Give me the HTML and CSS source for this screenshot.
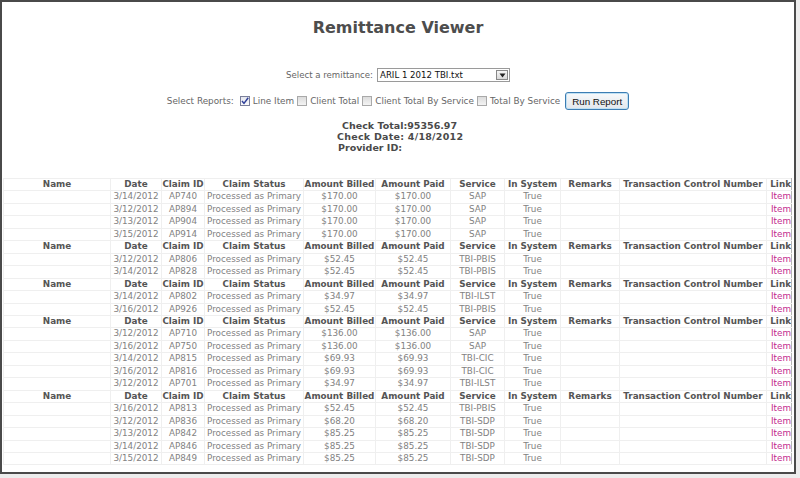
FILE: index.html
```html
<!DOCTYPE html>
<html>
<head>
<meta charset="utf-8">
<link rel="stylesheet" href="styles.css">
</head>
<body>
<div class="frame">
  <h1 class="title">Remittance Viewer</h1>
  <div class="row remit">
    <span class="lbl">Select a remittance:</span>
    <div class="select"><span class="sel-text">ARIL 1 2012 TBI.txt</span><span class="sel-btn"><svg width="7" height="5" viewBox="0 0 7 5"><path d="M0.5 0.5 L6.5 0.5 L3.5 4.5 Z" fill="#222"/></svg></span></div>
  </div>
  <div class="row reports">
    <span class="lbl first">Select Reports:</span>
    <span class="cb checked"><svg width="10" height="10" viewBox="0 0 10 10"><path d="M2 5 L4 7.4 L8.2 1.8" fill="none" stroke="#2e3f99" stroke-width="1.5"/></svg></span><span class="lbl">Line Item</span>
    <span class="cb"></span><span class="lbl">Client Total</span>
    <span class="cb"></span><span class="lbl">Client Total By Service</span>
    <span class="cb"></span><span class="lbl">Total By Service</span>
    <button class="run">Run Report</button>
  </div>
  <div class="check">
    <div>Check Total:95356.97</div>
    <div>Check Date: 4/18/2012</div>
    <div>Provider ID:</div>
  </div>
  <table class="grid">
    <colgroup>
      <col class="c-name"><col class="c-date"><col class="c-id"><col class="c-status"><col class="c-billed"><col class="c-paid"><col class="c-svc"><col class="c-sys"><col class="c-rem"><col class="c-tcn"><col class="c-link">
    </colgroup>
    <tbody>
      <tr class="hd"><th>Name</th><th>Date</th><th>Claim ID</th><th>Claim Status</th><th>Amount Billed</th><th>Amount Paid</th><th>Service</th><th>In System</th><th>Remarks</th><th>Transaction Control Number</th><th class="r">Link</th></tr>
      <tr><td></td><td>3/14/2012</td><td>AP740</td><td>Processed as Primary</td><td>$170.00</td><td>$170.00</td><td>SAP</td><td>True</td><td></td><td></td><td class="r"><a>Item</a></td></tr>
      <tr><td></td><td>3/12/2012</td><td>AP894</td><td>Processed as Primary</td><td>$170.00</td><td>$170.00</td><td>SAP</td><td>True</td><td></td><td></td><td class="r"><a>Item</a></td></tr>
      <tr><td></td><td>3/13/2012</td><td>AP904</td><td>Processed as Primary</td><td>$170.00</td><td>$170.00</td><td>SAP</td><td>True</td><td></td><td></td><td class="r"><a>Item</a></td></tr>
      <tr><td></td><td>3/15/2012</td><td>AP914</td><td>Processed as Primary</td><td>$170.00</td><td>$170.00</td><td>SAP</td><td>True</td><td></td><td></td><td class="r"><a>Item</a></td></tr>
      <tr class="hd"><th>Name</th><th>Date</th><th>Claim ID</th><th>Claim Status</th><th>Amount Billed</th><th>Amount Paid</th><th>Service</th><th>In System</th><th>Remarks</th><th>Transaction Control Number</th><th class="r">Link</th></tr>
      <tr><td></td><td>3/12/2012</td><td>AP806</td><td>Processed as Primary</td><td>$52.45</td><td>$52.45</td><td>TBI-PBIS</td><td>True</td><td></td><td></td><td class="r"><a>Item</a></td></tr>
      <tr><td></td><td>3/14/2012</td><td>AP828</td><td>Processed as Primary</td><td>$52.45</td><td>$52.45</td><td>TBI-PBIS</td><td>True</td><td></td><td></td><td class="r"><a>Item</a></td></tr>
      <tr class="hd"><th>Name</th><th>Date</th><th>Claim ID</th><th>Claim Status</th><th>Amount Billed</th><th>Amount Paid</th><th>Service</th><th>In System</th><th>Remarks</th><th>Transaction Control Number</th><th class="r">Link</th></tr>
      <tr><td></td><td>3/14/2012</td><td>AP802</td><td>Processed as Primary</td><td>$34.97</td><td>$34.97</td><td>TBI-ILST</td><td>True</td><td></td><td></td><td class="r"><a>Item</a></td></tr>
      <tr><td></td><td>3/16/2012</td><td>AP926</td><td>Processed as Primary</td><td>$52.45</td><td>$52.45</td><td>TBI-PBIS</td><td>True</td><td></td><td></td><td class="r"><a>Item</a></td></tr>
      <tr class="hd"><th>Name</th><th>Date</th><th>Claim ID</th><th>Claim Status</th><th>Amount Billed</th><th>Amount Paid</th><th>Service</th><th>In System</th><th>Remarks</th><th>Transaction Control Number</th><th class="r">Link</th></tr>
      <tr><td></td><td>3/12/2012</td><td>AP710</td><td>Processed as Primary</td><td>$136.00</td><td>$136.00</td><td>SAP</td><td>True</td><td></td><td></td><td class="r"><a>Item</a></td></tr>
      <tr><td></td><td>3/16/2012</td><td>AP750</td><td>Processed as Primary</td><td>$136.00</td><td>$136.00</td><td>SAP</td><td>True</td><td></td><td></td><td class="r"><a>Item</a></td></tr>
      <tr><td></td><td>3/14/2012</td><td>AP815</td><td>Processed as Primary</td><td>$69.93</td><td>$69.93</td><td>TBI-CIC</td><td>True</td><td></td><td></td><td class="r"><a>Item</a></td></tr>
      <tr><td></td><td>3/16/2012</td><td>AP816</td><td>Processed as Primary</td><td>$69.93</td><td>$69.93</td><td>TBI-CIC</td><td>True</td><td></td><td></td><td class="r"><a>Item</a></td></tr>
      <tr><td></td><td>3/12/2012</td><td>AP701</td><td>Processed as Primary</td><td>$34.97</td><td>$34.97</td><td>TBI-ILST</td><td>True</td><td></td><td></td><td class="r"><a>Item</a></td></tr>
      <tr class="hd"><th>Name</th><th>Date</th><th>Claim ID</th><th>Claim Status</th><th>Amount Billed</th><th>Amount Paid</th><th>Service</th><th>In System</th><th>Remarks</th><th>Transaction Control Number</th><th class="r">Link</th></tr>
      <tr><td></td><td>3/16/2012</td><td>AP813</td><td>Processed as Primary</td><td>$52.45</td><td>$52.45</td><td>TBI-PBIS</td><td>True</td><td></td><td></td><td class="r"><a>Item</a></td></tr>
      <tr><td></td><td>3/12/2012</td><td>AP836</td><td>Processed as Primary</td><td>$68.20</td><td>$68.20</td><td>TBI-SDP</td><td>True</td><td></td><td></td><td class="r"><a>Item</a></td></tr>
      <tr><td></td><td>3/13/2012</td><td>AP842</td><td>Processed as Primary</td><td>$85.25</td><td>$85.25</td><td>TBI-SDP</td><td>True</td><td></td><td></td><td class="r"><a>Item</a></td></tr>
      <tr><td></td><td>3/14/2012</td><td>AP846</td><td>Processed as Primary</td><td>$85.25</td><td>$85.25</td><td>TBI-SDP</td><td>True</td><td></td><td></td><td class="r"><a>Item</a></td></tr>
      <tr><td></td><td>3/15/2012</td><td>AP849</td><td>Processed as Primary</td><td>$85.25</td><td>$85.25</td><td>TBI-SDP</td><td>True</td><td></td><td></td><td class="r"><a>Item</a></td></tr>
    </tbody>
  </table>
</div>
</body>
</html>
```
FILE: styles.css
```css
html, body {
  margin: 0;
  padding: 0;
}
body {
  background: #ededed;
  font-family: "DejaVu Sans", Verdana, sans-serif;
  color: #666;
  width: 800px;
  height: 478px;
  overflow: hidden;
}
.frame {
  box-sizing: border-box;
  width: 796px;
  height: 474px;
  background: #fff;
  border: 2px solid #4a4a4a;
  overflow: hidden;
}
.title {
  margin: 16px 0 0;
  font-size: 16px;
  line-height: 20px;
  font-weight: bold;
  color: #4d4d4d;
  text-align: center;
}
.row {
  display: flex;
  justify-content: center;
  align-items: center;
}
.lbl {
  font-size: 8.6px;
  color: #666;
  white-space: nowrap;
}
.remit {
  margin-top: 30px;
  height: 14px;
  gap: 4px;
}
.select {
  box-sizing: border-box;
  width: 133px;
  height: 14px;
  border: 1px solid #9a9a9a;
  display: flex;
  align-items: center;
  justify-content: space-between;
  padding: 0 1px 0 2px;
  background: #fff;
}
.sel-text {
  font-size: 8.6px;
  color: #111;
}
.sel-btn {
  box-sizing: border-box;
  width: 12px;
  height: 10px;
  border: 1px solid #888;
  background: linear-gradient(#f6f6f6, #d8d8d8);
  display: flex;
  align-items: center;
  justify-content: center;
}
.reports {
  margin-top: 10px;
  height: 18px;
  gap: 3px;
}
.reports .lbl {
  font-size: 8.85px;
}
.reports .first {
  margin-right: 3px;
}
.cb {
  box-sizing: border-box;
  width: 10px;
  height: 10px;
  border: 1px solid #a9a9a9;
  background: linear-gradient(#dcdcdc, #f4f4f4);
  display: inline-block;
}
.cb.checked {
  border-color: #7a7f9a;
  background: linear-gradient(#e4e6ee, #fafafa);
  position: relative;
}
.cb.checked svg {
  position: absolute;
  left: -1px;
  top: -1px;
}
.run {
  box-sizing: border-box;
  margin-left: 2px;
  width: 64px;
  height: 18px;
  padding: 0;
  border: 1px solid #3c7db3;
  border-radius: 3px;
  background: linear-gradient(#f7f9fb, #e2e7ec);
  box-shadow: inset 0 0 0 1px #bfe0f3;
  font-family: "Liberation Sans", Arial, sans-serif;
  font-size: 9.8px;
  color: #111;
}
.check {
  margin: 9.5px auto 0;
  width: 126px;
  padding-left: 12px;
  font-size: 9.5px;
  line-height: 11px;
  font-weight: bold;
  color: #4a4a4a;
}
.check div:nth-child(1) { padding-left: 1px; }
.check div:nth-child(2) { margin-left: -4px; letter-spacing: 0.25px; }
.check div:nth-child(3) { margin-left: -3px; }
.grid {
  margin: 25.5px 0 0 1px;
  width: 788px;
  table-layout: fixed;
  border-collapse: collapse;
  font-size: 8.8px;
}
.c-name { width: 107px; }
.c-date { width: 51px; }
.c-id { width: 43px; }
.c-status { width: 99px; }
.c-billed { width: 72px; }
.c-paid { width: 75px; }
.c-svc { width: 54px; }
.c-sys { width: 56px; }
.c-rem { width: 59px; }
.c-tcn { width: 147px; }
.c-link { width: 25px; }
.grid th, .grid td {
  padding: 0;
  height: 11.45px;
  line-height: 11.45px;
  border: 1px solid #efefef;
  text-align: center;
  white-space: nowrap;
  overflow: hidden;
}
.grid th {
  font-weight: bold;
  color: #555;
}
.grid td {
  color: #828282;
}
.grid .r {
  text-align: right;
  border-right: 1px solid #b5b5b5;
}
.grid a {
  color: #c22a8c;
}
```
